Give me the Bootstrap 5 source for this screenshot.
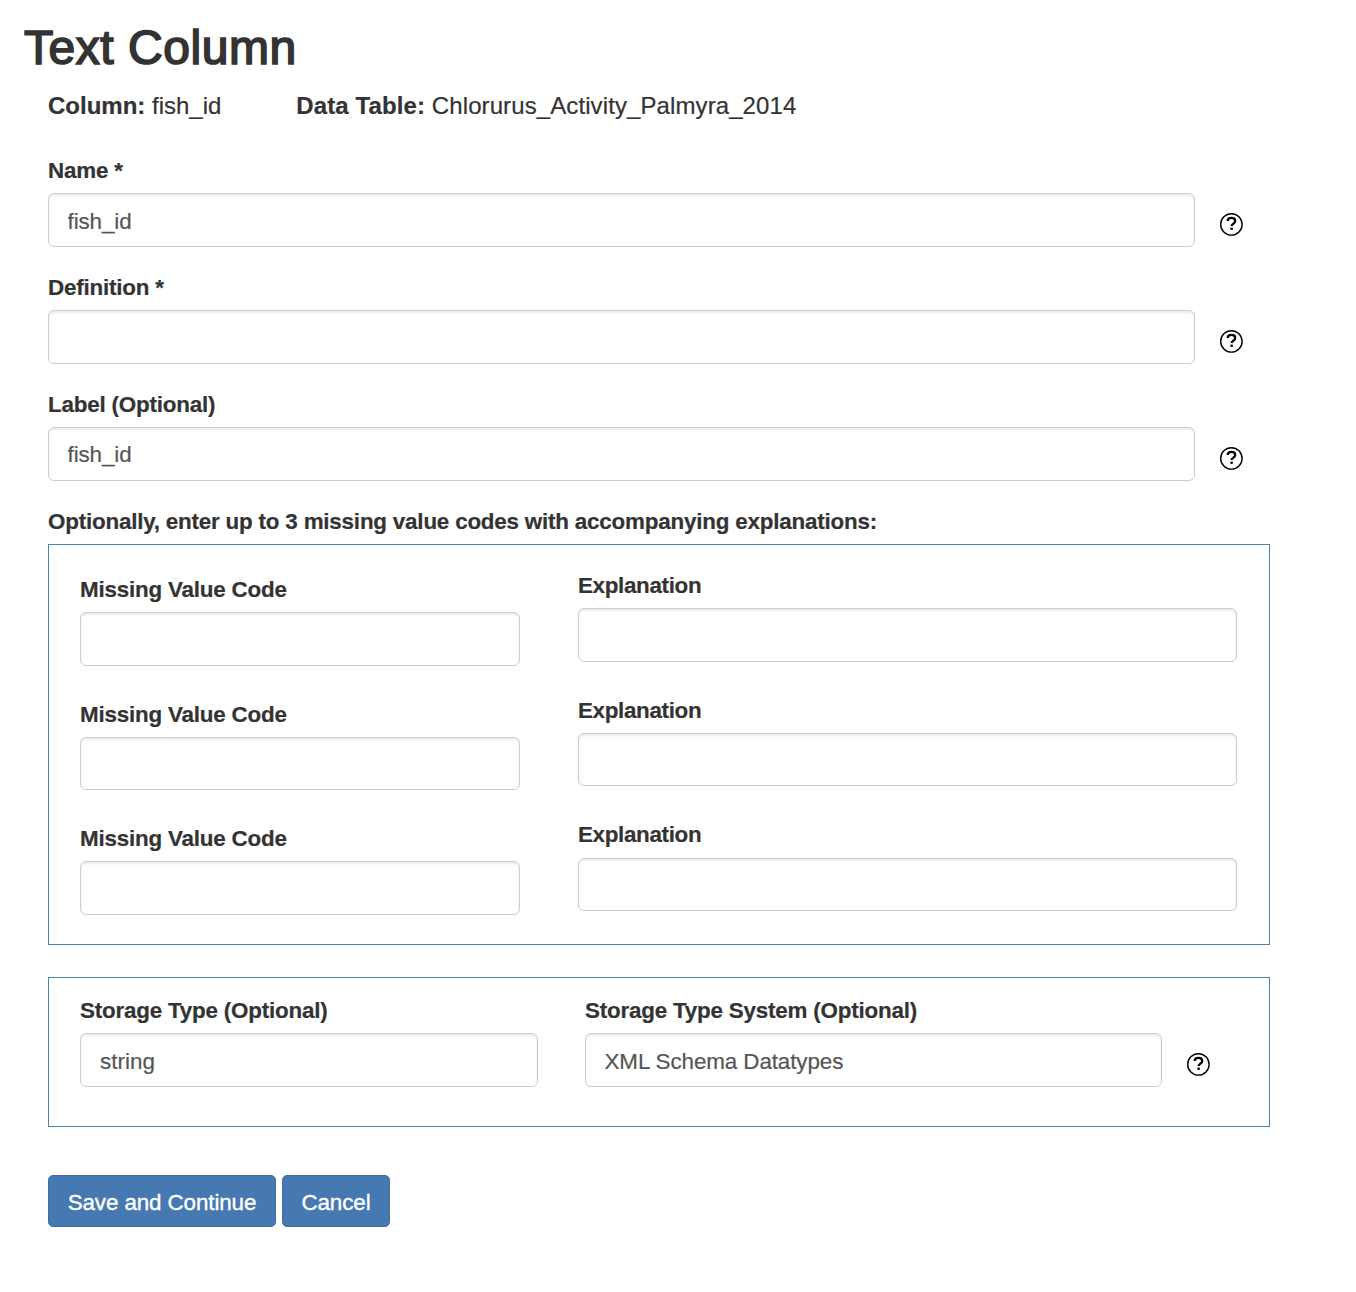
<!DOCTYPE html>
<html lang="en">
<head>
<meta charset="utf-8">
<meta name="viewport" content="width=device-width, initial-scale=1">
<title>Text Column</title>
<link href="https://cdn.jsdelivr.net/npm/bootstrap@5.3.0/dist/css/bootstrap.min.css" rel="stylesheet">
<style>
body{font-family:"Liberation Sans",Arial,sans-serif;font-size:22.4px;line-height:32px;color:#333;background:#fff}
.page-title{font-size:48px;line-height:54px;font-weight:400;-webkit-text-stroke:1.7px #333;padding:21px 0 0 24px;letter-spacing:.55px}
.main-form{margin-left:48px;width:1222px}
.summary-line{font-size:24px;line-height:34px;margin-top:14px;gap:75px;-webkit-text-stroke:.2px #333}
.table-name{letter-spacing:.1px}
.form-label{display:block;font-weight:700;line-height:32px;padding-top:1px;margin-bottom:6px;letter-spacing:-.2px;white-space:nowrap;-webkit-text-stroke:.2px #333}
.expl-label{letter-spacing:-.33px}
.form-control{height:54px;font-size:22.4px;line-height:32px;letter-spacing:-.09px;padding:3px 19px 0 18.5px;border:1px solid #ccc;border-radius:6px;color:#555;background:#fff;box-shadow:inset 0 2px 2px rgba(0,0,0,.075);-webkit-text-stroke:.2px #555}
#lab{padding-top:1px}
#st{letter-spacing:.05px;padding-left:19px}
#c2,#e2{height:53px}
#e3{height:53px;margin-top:7px}
.field-block{margin-bottom:24px}
.first-block{margin-top:31px}
.field-wide{width:1147px}
.help-icon{width:24px;height:24px;display:block;flex:none;margin:8px 0 0 24px}
.group-box{border:1px solid #4682b4}
.codes-box{height:401px;padding:24px 32px 0 31px}
.code-row{height:124.5px}
.code-col{width:440px;margin-right:58px;padding-top:4px}
.expl-col{width:659px}
.storage-box{height:150px;margin-top:32px;padding:16px 0 0 31px}
.type-col{width:458px;margin-right:47px}
.system-col{width:577px}
.actions{margin-top:48px;gap:6px}
.btn-primary{--bs-btn-bg:#4678b2;--bs-btn-border-color:#3d6da5;height:52px;font-size:22.4px;line-height:32px;letter-spacing:-.11px;padding:3px 0 0;border-radius:5px;white-space:nowrap;-webkit-text-stroke:.35px #fff}
.btn-save{width:228px}
.btn-cancel{width:108px}
</style>
</head>
<body>
<svg class="d-none"><symbol id="help" viewBox="-.4 -.4 24 24"><circle cx="12" cy="12" r="10.7" fill="none" stroke="#000" stroke-width="1.4"/><path d="M8.3 8.7C8.3 6.6 9.8 5.5 12 5.5s3.8 1.1 3.8 3c0 1.5-.9 2.2-1.9 2.9-1.1.8-1.7 1.2-1.7 2.3" fill="none" stroke="#000" stroke-width="2.3"/><path d="M11 15.2h2.4v2.3H11z"/></symbol></svg>
<h1 class="page-title mb-0">Text Column</h1>
<form class="main-form">
  <div class="summary-line d-flex">
    <div><strong>Column:</strong> fish_id</div>
    <div class="table-name"><strong>Data Table:</strong> Chlorurus_Activity_Palmyra_2014</div>
  </div>
  <div class="field-block first-block">
    <label class="form-label" for="name">Name *</label>
    <div class="d-flex align-items-center"><input id="name" class="form-control field-wide" value="fish_id"><svg class="help-icon"><use href="#help"/></svg></div>
  </div>
  <div class="field-block">
    <label class="form-label" for="def">Definition *</label>
    <div class="d-flex align-items-center"><input id="def" class="form-control field-wide"><svg class="help-icon"><use href="#help"/></svg></div>
  </div>
  <div class="field-block">
    <label class="form-label" for="lab">Label (Optional)</label>
    <div class="d-flex align-items-center"><input id="lab" class="form-control field-wide" value="fish_id"><svg class="help-icon"><use href="#help"/></svg></div>
  </div>
  <div class="form-label">Optionally, enter up to 3 missing value codes with accompanying explanations:</div>
  <div class="group-box codes-box">
    <div class="code-row d-flex">
      <div class="code-col"><label class="form-label" for="c1">Missing Value Code</label><input id="c1" class="form-control"></div>
      <div class="expl-col"><label class="form-label expl-label" for="e1">Explanation</label><input id="e1" class="form-control"></div>
    </div>
    <div class="code-row d-flex">
      <div class="code-col"><label class="form-label" for="c2">Missing Value Code</label><input id="c2" class="form-control"></div>
      <div class="expl-col"><label class="form-label expl-label" for="e2">Explanation</label><input id="e2" class="form-control"></div>
    </div>
    <div class="code-row d-flex">
      <div class="code-col"><label class="form-label" for="c3">Missing Value Code</label><input id="c3" class="form-control"></div>
      <div class="expl-col"><label class="form-label expl-label mb-0" for="e3">Explanation</label><input id="e3" class="form-control"></div>
    </div>
  </div>
  <div class="group-box storage-box d-flex">
    <div class="type-col"><label class="form-label" for="st">Storage Type (Optional)</label><input id="st" class="form-control" value="string"></div>
    <div><label class="form-label" for="sys">Storage Type System (Optional)</label>
      <div class="d-flex align-items-center"><input id="sys" class="form-control system-col" value="XML Schema Datatypes"><svg class="help-icon"><use href="#help"/></svg></div>
    </div>
  </div>
  <div class="actions d-flex">
    <button type="button" class="btn btn-primary btn-save">Save and Continue</button>
    <button type="button" class="btn btn-primary btn-cancel">Cancel</button>
  </div>
</form>
<script src="https://cdn.jsdelivr.net/npm/bootstrap@5.3.0/dist/js/bootstrap.bundle.min.js"></script>
</body>
</html>
